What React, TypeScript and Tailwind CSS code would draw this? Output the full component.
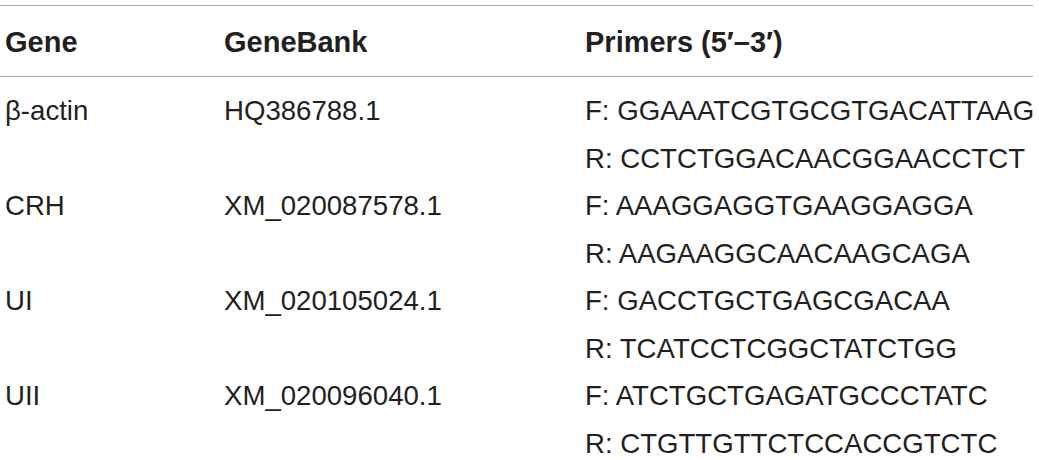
import React from 'react';

interface PrimerRow {
  gene: string;
  accession: string;
  forward: string;
  reverse: string;
}

const rows: PrimerRow[] = [
  { gene: 'β-actin', accession: 'HQ386788.1', forward: 'GGAAATCGTGCGTGACATTAAG', reverse: 'CCTCTGGACAACGGAACCTCT' },
  { gene: 'CRH', accession: 'XM_020087578.1', forward: 'AAAGGAGGTGAAGGAGGA', reverse: 'AAGAAGGCAACAAGCAGA' },
  { gene: 'UI', accession: 'XM_020105024.1', forward: 'GACCTGCTGAGCGACAA', reverse: 'TCATCCTCGGCTATCTGG' },
  { gene: 'UII', accession: 'XM_020096040.1', forward: 'ATCTGCTGAGATGCCCTATC', reverse: 'CTGTTGTTCTCCACCGTCTC' },
];

export default function App() {
  return (
    <div className="w-[1039px] h-[460px] bg-white overflow-hidden pt-[5px] font-['Liberation_Sans',Arial,sans-serif] text-[#231f20]">
      <div className="w-[1033px]">
        {/* Header */}
        <div className="border-t-[1.5px] border-b-[1.5px] border-[#a7a9ac] pt-[20px] pb-[18px]">
          <div className="grid grid-cols-[219px_361px_1fr] pl-[5px] text-[29px] leading-[32px] font-bold">
            <div>Gene</div>
            <div>GeneBank</div>
            <div>Primers (5′–3′)</div>
          </div>
        </div>

        {/* Body */}
        <div className="pt-[20px] flex flex-col gap-[19.5px]">
          {rows.map((row) => (
            <div
              key={row.gene}
              className="grid grid-cols-[219px_361px_1fr] pl-[5px] text-[27.6px] leading-[28px]"
            >
              <div>{row.gene}</div>
              <div>{row.accession}</div>
              <div className="flex flex-col gap-[19.5px] whitespace-nowrap">
                <div>F: {row.forward}</div>
                <div>R: {row.reverse}</div>
              </div>
            </div>
          ))}
        </div>
      </div>
    </div>
  );
}
